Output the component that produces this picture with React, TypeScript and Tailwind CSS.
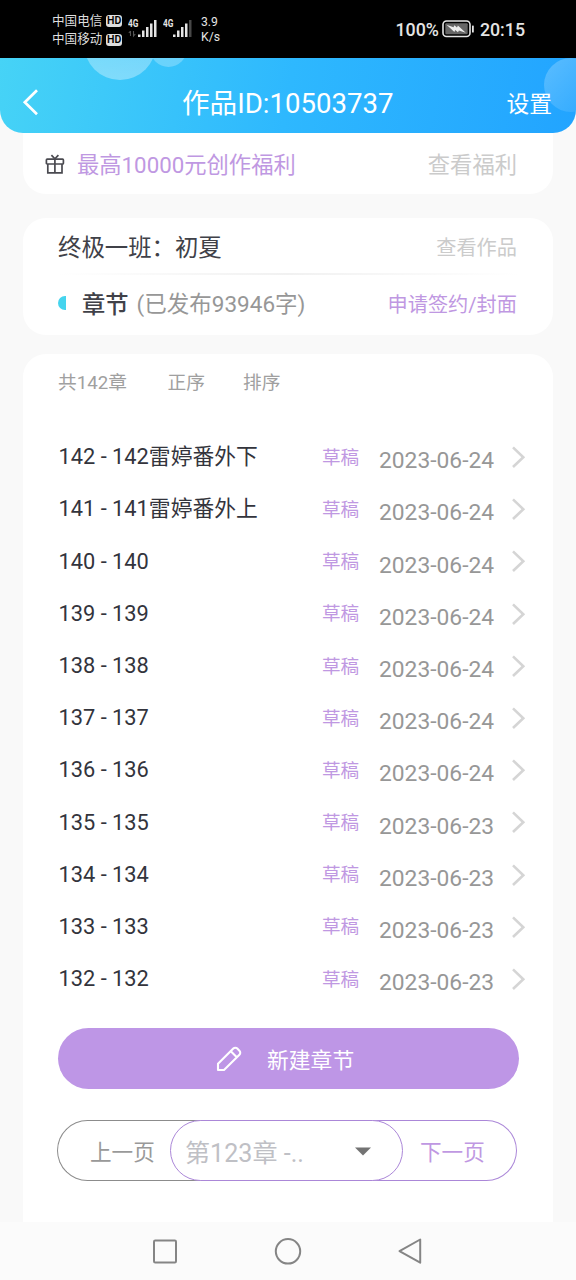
interface Chapter {
  no: number
  title: string
  date: string
}

const CHAPTERS: Chapter[] = [
  { no: 142, title: '142雷婷番外下', date: '2023-06-24' },
  { no: 141, title: '141雷婷番外上', date: '2023-06-24' },
  { no: 140, title: '140', date: '2023-06-24' },
  { no: 139, title: '139', date: '2023-06-24' },
  { no: 138, title: '138', date: '2023-06-24' },
  { no: 137, title: '137', date: '2023-06-24' },
  { no: 136, title: '136', date: '2023-06-24' },
  { no: 135, title: '135', date: '2023-06-23' },
  { no: 134, title: '134', date: '2023-06-23' },
  { no: 133, title: '133', date: '2023-06-23' },
  { no: 132, title: '132', date: '2023-06-23' },
]

function Carrier({ name }: { name: string }) {
  return (
    <div className="flex h-[18.5px] items-center gap-[3.5px] text-[12.6px] leading-none text-[#dedede]">
      {name}
      <span className="flex h-[12px] w-[16.5px] items-center justify-center rounded-[3px] bg-[#dedede] text-[10.5px] leading-none font-semibold text-black">
        HD
      </span>
    </div>
  )
}

function Signal({ full }: { full: boolean }) {
  return (
    <div className="relative h-[19px] w-[29px]">
      <span className="absolute -top-px left-0 origin-left scale-x-[0.72] text-[11.5px] leading-none font-bold text-[#e4e4e4]">4G</span>
      <svg className="absolute inset-0" width="29" height="19" viewBox="0 0 29 19" fill="#e4e4e4">
        {full && <path d="M2.5 12v5M0.8 14l1.7-2M5.5 12v5l1.8-2" fill="none" stroke="#555" strokeWidth="1.1" />}
        <rect x="10" y="15.5" width="2.5" height="2.5" />
        <rect x="14" y="11.5" width="2.5" height="6.5" />
        <rect x="18" y="8" width="2.5" height="10" />
        <rect x="22" y="4.5" width="2.5" height="13.5" />
        <rect x="26" y="1" width="2.5" height="17" fill={full ? '#e4e4e4' : '#484848'} />
      </svg>
    </div>
  )
}

function StatusBar() {
  return (
    <div className="flex h-[58px] shrink-0 bg-black text-[#e4e4e4]">
      <div className="ml-[52px] w-[76px] pt-[12px]">
        <Carrier name="中国电信" />
        <Carrier name="中国移动" />
      </div>
      <div className="flex gap-[6px] pt-[19px]">
        <Signal full />
        <Signal full={false} />
      </div>
      <div className="ml-[9px] pt-[15px] text-[12.2px] leading-[14.5px]">
        <div>3.9</div>
        <div>K/s</div>
      </div>
      <div className="mr-[51px] ml-auto flex items-center pt-[2px] text-[17.8px] leading-none font-medium">
        100%
        <svg className="mr-[5px] ml-[3px] -mt-[2px]" width="33" height="18" viewBox="0 0 33 18" fill="none">
          <rect x="1" y="1" width="27" height="15.5" rx="3.5" stroke="#e4e4e4" strokeWidth="1.6" />
          <rect x="3.3" y="3.3" width="22.4" height="11" rx="1" fill="#666" />
          <path d="M4.5 4.8l7 2.4.9-1.9 2.6 2.3.9-2 7.8 7.2-6.8-2.4-.9 1.9-2.8-2.4-.8 2z" fill="#eee" />
          <rect x="30" y="5.5" width="1.8" height="7" rx="0.6" fill="#e4e4e4" />
        </svg>
        20:15
      </div>
    </div>
  )
}

function Header() {
  return (
    <div className="relative z-10 flex h-[75px] shrink-0 items-center overflow-hidden rounded-b-[23px] bg-[linear-gradient(100deg,#46d3f6_0%,#2eb8fe_50%,#22a4ff_100%)] pt-[15px] text-white">
      <div className="absolute -top-[50px] left-[84px] size-[72px] rounded-full bg-gradient-to-b from-white/20 to-white/35" />
      <div className="absolute -top-[28px] left-[150px] size-[37px] rounded-full bg-white/25" />
      <div className="absolute top-0 left-[544px] size-[54px] rounded-full bg-gradient-to-br from-white/25 to-white/5" />
      <svg className="relative -mt-[2px] ml-[22px]" width="18" height="30" viewBox="0 0 18 30" fill="none" stroke="white" strokeWidth="2.7">
        <path d="M15 3.2L2.8 15.3L15 27.2" />
      </svg>
      <div className="relative ml-[142px] pt-[2px] text-[27.6px] leading-none">作品ID:10503737</div>
      <div className="relative mr-[24px] ml-auto pt-[5px] text-[22.8px] leading-none">设置</div>
    </div>
  )
}

function GiftIcon() {
  return (
    <svg width="20" height="20" viewBox="0 0 20 20" fill="none" stroke="#4a4a50" strokeWidth="1.7">
      <rect x="1.4" y="5.2" width="17" height="4.8" rx="0.8" />
      <path d="M2.8 10v8.8h14.2V10M9.9 5.2v13.6M6.4 1.2l3.5 3.6L13.4 1.2" />
    </svg>
  )
}

function ChapterRow({ chapter }: { chapter: Chapter }) {
  return (
    <div className="flex h-[52.2px] items-center leading-none *:shrink-0">
      <span className="w-[263.5px] pt-[2px] pl-[0.5px] text-[21.8px] text-[#33343c]">
        {chapter.no} - {chapter.title}
      </span>
      <span className="w-[57.5px] pt-[4px] pl-[0.5px] text-[18.6px] text-[#bf98e2]">草稿</span>
      <span className="w-[132px] pt-[11px] text-[22.8px] text-[#979797]">{chapter.date}</span>
      <svg className="mt-[2px]" width="16" height="24" viewBox="0 0 16 24" fill="none" stroke="#d5d5d5" strokeWidth="2.6">
        <path d="M2 2.4L12.3 12.2L2 22" />
      </svg>
    </div>
  )
}

function Pager() {
  return (
    <div className="mt-[31px] -ml-px flex h-[61px] w-[460px] text-[21.6px] leading-none">
      <button className="w-[146px] rounded-l-full border border-r-0 border-[#8c8c8c] pt-[5px] pl-[32px] text-left text-[#999]">
        上一页
      </button>
      <button className="z-10 -ml-[33px] flex w-[233px] items-center justify-between rounded-full border border-[#ab87d8] bg-white pr-[31px] pl-[14px] text-[25.1px] text-[#bfc0c5]">
        <span className="pt-[5px]">第123章 -..</span>
        <svg className="mt-[2px]" width="16" height="9" viewBox="0 0 16 9" fill="#737373">
          <path d="M0 0.5h16L8 8.5z" />
        </svg>
      </button>
      <button className="-ml-[33px] w-[147px] rounded-r-full border border-l-0 border-[#ab87d8] pt-[5px] pl-[50px] text-left text-[#bf98e2]">
        下一页
      </button>
    </div>
  )
}

function NavBar() {
  return (
    <div className="h-[58px] shrink-0 bg-[#fbfbfb]">
      <svg width="576" height="58" viewBox="0 0 576 58" fill="none" stroke="#858585" strokeWidth="2">
        <rect x="154" y="18.5" width="22" height="22" rx="1.2" />
        <circle cx="288" cy="29.3" r="12.2" />
        <path d="M420.2 17.5v23.2L399.5 29.1z" strokeLinejoin="round" />
      </svg>
    </div>
  )
}

export default function App() {
  return (
    <div
      lang="zh-CN"
      className="flex h-[1280px] w-[576px] flex-col overflow-hidden bg-[#f9f9f9] font-['Roboto','Noto_Sans_CJK_SC',sans-serif] whitespace-nowrap"
    >
      <StatusBar />
      <Header />

      <main className="flex min-h-0 flex-1 flex-col px-[23px]">
        {/* Welfare banner */}
        <section className="flex h-[61px] shrink-0 items-center rounded-b-[23px] bg-white pr-[36px] pl-[22px] text-[22.3px] leading-none">
          <GiftIcon />
          <span className="ml-[12px] pt-[3px] text-[#bf98e2]">最高10000元创作福利</span>
          <span className="ml-auto pt-[3px] text-[#cbcbcb]">查看福利</span>
        </section>

        {/* Work info */}
        <section className="mt-6 h-[117px] shrink-0 rounded-[23px] bg-white px-[35px] leading-none">
          <div className="flex h-[55px] items-center justify-between pt-[5px]">
            <span className="pt-px text-[23.4px] text-[#404148]">终极一班：初夏</span>
            <span className="pr-px text-[20.2px] text-[#cbcbcb]">查看作品</span>
          </div>
          <div className="h-[2px] bg-gradient-to-r from-transparent via-[#f1f1f1] to-transparent" />
          <div className="flex h-[56px] items-center">
            <span className="h-[14px] w-[8px] rounded-l-full bg-[#45d4ee]" />
            <span className="ml-[16px] pt-[5px] text-[23.3px] font-medium text-[#404148]">章节</span>
            <span className="ml-[8px] pt-[3px] text-[22.5px] text-[#979797]">(已发布93946字)</span>
            <span className="ml-auto pt-[4px] pr-px text-[20.2px] text-[#bf98e2]">申请签约/封面</span>
          </div>
        </section>

        {/* Chapter list */}
        <section className="mt-[19px] flex-1 rounded-t-[23px] bg-white px-[35px]">
          <div className="flex h-[56px] items-center pt-[3px] text-[18.7px] leading-none text-[#a0a0a0]">
            <span className="w-[109.5px]">共142章</span>
            <span className="w-[75.5px]">正序</span>
            <span>排序</span>
          </div>
          <div className="mt-[20px]">
            {CHAPTERS.map(chapter => (
              <ChapterRow key={chapter.no} chapter={chapter} />
            ))}
          </div>

          <button className="mt-[24px] flex h-[61px] w-[460.5px] items-center rounded-full bg-[#be96e6] pl-[158px] text-[21.8px] leading-none text-white">
            <svg width="26" height="26" viewBox="0 0 26 26" fill="none" stroke="white" strokeWidth="2.1" strokeLinejoin="round">
              <path d="M2 24v-6.2L17.3 2.6a2.8 2.8 0 0 1 4 0l2.1 2.1a2.8 2.8 0 0 1 0 4L8 24zM14.8 5.2l6 6" />
            </svg>
            <span className="ml-[25px] pt-[5px]">新建章节</span>
          </button>

          <Pager />
        </section>
      </main>

      <NavBar />
    </div>
  )
}
